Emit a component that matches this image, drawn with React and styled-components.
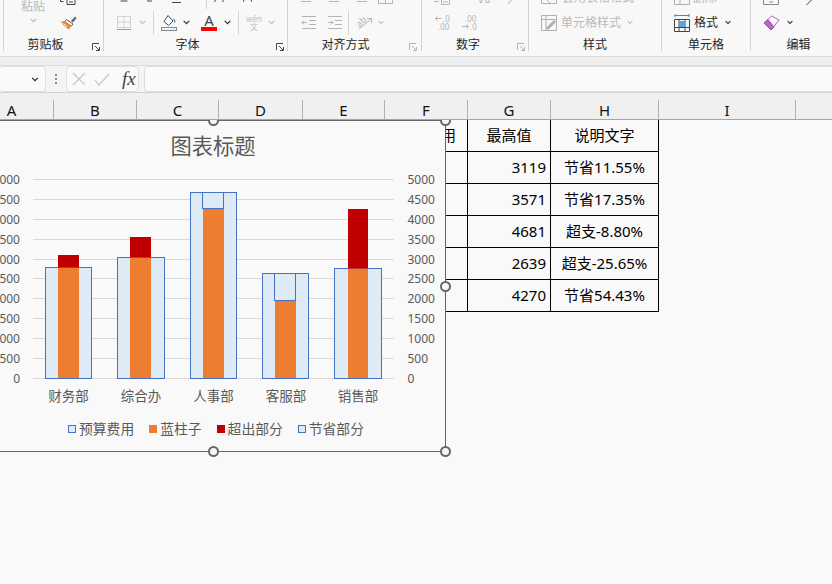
import React from "react";
import styled, { createGlobalStyle } from "styled-components";

const CJK = `"Noto Sans", "Noto Sans CJK SC", sans-serif`;

const GlobalStyle = createGlobalStyle`
  html, body {
    margin: 0;
    height: 100%;
    overflow: hidden;
    background: #f9f9f9;
    font-family: ${CJK};
  }
`;

const Page = styled.div`
  width: 832px;
  height: 584px;
  overflow: hidden;
  display: flex;
  flex-direction: column;
  background: #f9f9f9;
`;

/* ---------- ribbon ---------- */
const Ribbon = styled.div`
  flex: none;
  display: flex;
  box-sizing: border-box;
  height: 57px;
  padding-left: 3px;
  background: #f8f8f8;
  border-bottom: 1px solid #dcdcdc;
`;

const Group = styled.div`
  position: relative;
  flex: none;
  box-sizing: border-box;
  width: ${(p) => p.$w}px;
  height: 51px;
  border-left: 1px solid #d4d4d4;
  display: flex;
  flex-direction: column;
`;

const TopRow = styled.div`
  flex: none;
  height: 10px;
  display: flex;
  align-items: flex-start;
  overflow: hidden;
`;

const MainRow = styled.div`
  flex: none;
  box-sizing: border-box;
  height: 28px;
  padding-bottom: 3px;
  display: flex;
  align-items: center;
`;

const ClipBody = styled.div`
  flex: none;
  height: 38px;
  display: flex;
  overflow: hidden;
`;

const PasteCol = styled.div`
  flex: none;
  width: 24px;
  margin-left: 17px;
  height: 38px;
  display: flex;
  flex-direction: column;
  align-items: center;
  justify-content: flex-end;
  gap: 4px;
  padding-bottom: 15px;
  box-sizing: border-box;
  font-size: 12px;
  line-height: 14px;
  color: #b8b8b8;
`;

const ToolCol = styled.div`
  flex: none;
  margin-left: 15px;
  display: flex;
  flex-direction: column;
`;

const Slot = styled.span`
  flex: none;
  display: flex;
  margin-left: ${(p) => p.$ml || 0}px;
`;

const Sep = styled.span`
  flex: none;
  width: 1px;
  height: ${(p) => p.$h || 24}px;
  margin-left: ${(p) => p.$ml || 0}px;
  background: #d4d4d4;
`;

const ToolText = styled.span`
  flex: none;
  margin-left: ${(p) => p.$ml || 0}px;
  font-size: 12px;
  line-height: 16px;
  white-space: nowrap;
  color: ${(p) => (p.$off ? "#b8b8b8" : "#262626")};
`;

const ClippedText = styled(ToolText)`
  margin-top: -10px;
`;

const GroupLabel = styled.div`
  flex: none;
  height: 13px;
  padding: 0 ${(p) => p.$pr || 0}px 0 ${(p) => p.$pl || 0}px;
  font-size: 12px;
  line-height: 14px;
  text-align: center;
  color: #262626;
`;

const LauncherBox = styled.span`
  position: absolute;
  right: ${(p) => p.$r || 3}px;
  bottom: 0;
  display: flex;
`;

const FontColorWrap = styled.span`
  flex: none;
  width: 16px;
  height: 17px;
  margin-left: ${(p) => p.$ml}px;
  display: flex;
  flex-direction: column;
  align-items: center;
  font-size: 15px;
  line-height: 13px;
  color: #444;
`;

const RedBar = styled.span`
  flex: none;
  width: 16px;
  height: 4px;
  background: #ff0000;
`;

const WenWrap = styled.span`
  flex: none;
  width: 16px;
  margin-left: ${(p) => p.$ml}px;
  display: flex;
  flex-direction: column;
  align-items: center;
  color: #bdbdbd;
  font-size: 8px;
  line-height: 8px;
`;

const Chevron = ({ c = "#333", w = 7 }) => (
  <svg width={w} height="5" viewBox="0 0 7 5" fill="none" stroke={c} strokeWidth="1.2">
    <path d="M.7 .8 3.5 3.6 6.3 .8" />
  </svg>
);

const Launcher = ({ c = "#444", r }) => (
  <LauncherBox $r={r}>
    <svg width="8" height="8" viewBox="0 0 8 8" fill="none" stroke={c} strokeWidth="1">
      <path d="M.5 7V.5H7M3 3 7 7M7.5 4V7.5H4" />
    </svg>
  </LauncherBox>
);

const BordersIcon = () => (
  <svg width="16" height="16" viewBox="0 0 16 16" fill="none" stroke="#b0b0b0">
    <path d="M1.5 1.5h13v11h-13zM8 1.5v11M1.5 7h13" strokeDasharray="1 1" />
    <path d="M1 14.5h14" stroke="#9a9a9a" />
  </svg>
);

const PainterIcon = () => (
  <svg width="18" height="17" viewBox="0 0 18 17" fill="none">
    <path d="M11 7 15 2.5l1.6 1.5L13 8.5z" fill="#666" />
    <path d="M6.5 5.5 13 10l-1.7 2.2-6.6-4.6z" fill="#fff" stroke="#555" />
    <path d="M5 7 1 7.5c1.5 3 4.5 6.5 8 8l2-3.5z" fill="#ee8a2c" />
    <path d="M3.5 9.5 7 13" stroke="#fff" />
  </svg>
);

const FillIcon = () => (
  <svg width="16" height="18" viewBox="0 0 16 18" fill="none">
    <path d="M7 1.5 12 7l-4.500 4.500L3 7.500z" stroke="#444" fill="#fff" />
    <path d="M12.500 4c1.500 1 2 3 1.700 5-1-.6-1.700-2-1.700-5z" fill="#2f7fc1" />
    <rect x=".5" y="13.5" width="15" height="3" fill="#f1f1f1" stroke="#8a8a8a" />
  </svg>
);

const IndentIcon = ({ flip }) => (
  <svg width="15" height="14" viewBox="0 0 15 14" fill="none" stroke="#b4b4b4">
    <path d="M1 .5h14M8 4.500h7M8 8.500h7M1 12.500h14" />
    <path d={flip ? "M1 6.500h5M4 4.500l2 2-2 2" : "M1 6.500h5M3 4.500l-2 2 2 2"} />
  </svg>
);

const AbIcon = () => (
  <svg width="18" height="18" viewBox="0 0 18 18" fill="none" stroke="#b4b4b4">
    <text x="1" y="11" fontSize="9" fill="#b4b4b4" stroke="none" fontFamily="Noto Sans" transform="rotate(-45 6 8)">ab</text>
    <path d="M4 15 16 5M12 4.500h4.500V9" />
  </svg>
);

const DecimalIcon = ({ more }) => (
  <svg width="16" height="16" viewBox="0 0 16 16" fill="#b4b4b4" fontFamily="Noto Sans" fontSize="8">
    {more ? (
      <>
        <text x="4" y="6.500">.00</text>
        <text x="9" y="15">.0</text>
        <path d="M1 11.500h6M5.500 9.500l2 2-2 2" fill="none" stroke="#b4b4b4" />
      </>
    ) : (
      <>
        <text x="9" y="6.500">.0</text>
        <text x="4" y="15">.00</text>
        <path d="M1.500 3.500h6M3.500 1.500l-2 2 2 2" fill="none" stroke="#b4b4b4" />
      </>
    )}
  </svg>
);

const CellStyleIcon = () => (
  <svg width="16" height="16" viewBox="0 0 16 16" fill="none" stroke="#b0b0b0">
    <path d="M.5 .5h15v15H.5z" />
    <path d="M.5 4.500h15M5 .5v15" />
    <path d="M6 14 14 6" strokeWidth="3" />
  </svg>
);

const FormatIcon = () => (
  <svg width="16" height="18" viewBox="0 0 16 18" fill="none" stroke="#444">
    <path d="M.5 5.500h15v12H.5zM.5 13.500h15M5 5.500v12M11 5.500v12" />
    <rect x="5" y="7" width="6" height="6" fill="#5aa5dc" stroke="none" />
    <path d="M1 1.500h14M1 0v3M15 0v3" stroke="#2f8fd8" />
  </svg>
);

const EraserIcon = () => (
  <svg width="17" height="16" viewBox="0 0 17 16" fill="none">
    <path d="M1 8 8.500 1 16 5 8 15z" fill="#fff" stroke="#b061b8" />
    <path d="M1 8 5 4.500l6 7.500-3 3z" fill="#b868c0" stroke="#a04fa8" />
  </svg>
);

const TopMark = ({ w = 10, d, c = "#555" }) => (
  <svg width={w} height="6" viewBox={`0 0 ${w} 6`} fill="none" stroke={c}>
    <path d={d} />
  </svg>
);

/* ---------- formula bar ---------- */
const Band = styled.div`
  flex: none;
  height: 8px;
  background: #efefef;
`;

const FormulaBar = styled.div`
  flex: none;
  box-sizing: border-box;
  height: 27px;
  display: flex;
  align-items: stretch;
  background: #f4f4f4;
  border-top: 1px solid #dcdcdc;
`;

const FieldBox = styled.div`
  flex: ${(p) => (p.$grow ? "1" : "none")};
  box-sizing: border-box;
  width: ${(p) => (p.$w ? `${p.$w}px` : "auto")};
  margin-left: ${(p) => p.$ml || 0}px;
  margin-right: ${(p) => (p.$grow ? "-10px" : "0")};
  background: #fafafa;
  border: 1px solid #dedede;
  border-radius: 4px;
  display: flex;
  align-items: center;
`;

const NameBox = styled(FieldBox)`
  border-left: none;
  padding-left: 31px;
`;

const Dots = styled.span`
  flex: none;
  margin-left: 9px;
  align-self: center;
  display: flex;
  flex-direction: column;
  gap: 2px;
  & > i {
    width: 2px;
    height: 2px;
    background: #8a8a8a;
  }
`;

const FormulaMarks = styled.svg`
  flex: none;
  margin-left: 5px;
`;

const FxText = styled.span`
  margin-left: 6px;
  font-family: "Liberation Serif", serif;
  font-style: italic;
  font-size: 19px;
  line-height: 20px;
  color: #444;
`;

/* ---------- column headers ---------- */
const HeaderRow = styled.div`
  flex: none;
  position: relative;
  z-index: 2;
  box-sizing: border-box;
  height: 28px;
  margin-left: -30px;
  padding-top: 7px;
  display: flex;
  background: #f0f0f0;
  border-top: 1px solid #d2d2d2;
  border-bottom: 1px solid #a6a6a6;
`;

const ColHead = styled.div`
  flex: none;
  box-sizing: border-box;
  width: ${(p) => p.$w}px;
  height: 19px;
  border-right: 1px solid #b0b0b0;
  font-size: 15px;
  line-height: 20px;
  text-align: center;
  color: #111;
`;

/* ---------- sheet ---------- */
const Sheet = styled.div`
  position: relative;
  flex: 1;
`;

const Table = styled.div`
  margin-left: 385px;
  display: grid;
  grid-template-columns: 83px 83px 108px;
  width: 274px;
`;

const Cell = styled.div`
  box-sizing: border-box;
  height: 32px;
  padding: 0 ${(p) => (p.$align === "right" ? "4px" : "0")} 0 0;
  border-right: 1px solid #000;
  border-bottom: 1px solid #000;
  font-size: 15px;
  line-height: 31px;
  white-space: nowrap;
  color: #000;
  text-align: ${(p) => p.$align || "center"};
`;

const Chart = styled.div`
  position: absolute;
  left: -20px;
  top: 0;
  box-sizing: border-box;
  width: 466px;
  height: 332px;
  border: 1px solid #666;
  background: #f9f9f9;
  display: flex;
  flex-direction: column;
`;

const ChartTitle = styled.div`
  flex: none;
  height: 44px;
  padding-top: 9px;
  box-sizing: border-box;
  font-size: 21.3px;
  line-height: 32px;
  text-align: center;
  color: #595959;
`;

const PlotSvg = styled.svg`
  flex: none;
  display: block;
  font-family: ${CJK};
  fill: #595959;
`;

const Legend = styled.div`
  flex: none;
  height: 36px;
  padding: 1px 0 0 6px;
  box-sizing: border-box;
  display: flex;
  justify-content: center;
  gap: 15px;
  font-size: 13.8px;
  line-height: 24px;
  color: #595959;
`;

const LegendItem = styled.span`
  display: flex;
  align-items: center;
  gap: 3px;
  white-space: nowrap;
`;

const Swatch = styled.i`
  flex: none;
  box-sizing: border-box;
  width: 8px;
  height: 8px;
  background: ${(p) => p.$fill};
  border: ${(p) => (p.$line ? "1px solid #4472c4" : "none")};
`;

const Handle = styled.span`
  position: absolute;
  left: ${(p) => p.$x}px;
  top: ${(p) => p.$y}px;
  box-sizing: border-box;
  width: 11px;
  height: 11px;
  border: 2px solid #666;
  border-radius: 50%;
  background: #f9f9f9;
`;

const COLUMNS = [
  ["A", 84], ["B", 83], ["C", 82], ["D", 84], ["E", 82],
  ["F", 83], ["G", 83], ["H", 108], ["I", 137],
];

const DEPTS = [
  { name: "财务部", budget: 2796, actual: 3119, barX: 45.5, barW: 46, coreX: 58, coreW: 21, cx: 68.5, note: "节省11.55%" },
  { name: "综合办", budget: 3043, actual: 3571, barX: 117.5, barW: 47, coreX: 130, coreW: 21, cx: 141, note: "节省17.35%" },
  { name: "人事部", budget: 4681, actual: 4269, barX: 190.5, barW: 46, coreX: 203, coreW: 21, cx: 213.5, note: "超支-8.80%" },
  { name: "客服部", budget: 2639, actual: 1962, barX: 262.5, barW: 46, coreX: 275, coreW: 21, cx: 286, note: "超支-25.65%" },
  { name: "销售部", budget: 2765, actual: 4270, barX: 334.5, barW: 47, coreX: 348, coreW: 20, cx: 358, note: "节省54.43%" },
];

const TICKS = [0, 500, 1000, 1500, 2000, 2500, 3000, 3500, 4000, 4500, 5000];
const yOf = (v) => 378.4 - v * 0.0398;
const snap = (v) => Math.floor(yOf(v)) + 0.5;

function Plot() {
  return (
    <PlotSvg width="464" height="245" viewBox="-19 165 464 245">
      {TICKS.map((t) => (
        <g key={t}>
          <line x1="33" x2="394" y1={snap(t)} y2={snap(t)} stroke="#d9d9d9" />
          <text x="20" y={yOf(t)} fontSize="12" textAnchor="end" dominantBaseline="central">{t}</text>
          <text x="407.5" y={yOf(t)} fontSize="12" dominantBaseline="central">{t}</text>
        </g>
      ))}
      {DEPTS.map((d) => {
        const low = Math.min(d.budget, d.actual);
        const high = Math.max(d.budget, d.actual);
        const redTop = Math.ceil(yOf(high));
        return (
          <g key={d.name}>
            <rect x={d.barX} y={snap(d.budget)} width={d.barW} height={378.5 - snap(d.budget)} fill="#deebf7" stroke="#4472c4" />
            <rect x={d.coreX} y={snap(low)} width={d.coreW} height={378 - snap(low)} fill="#ed7d31" />
            {d.actual > d.budget ? (
              <rect x={d.coreX} y={redTop} width={d.coreW} height={snap(low) - redTop} fill="#c00000" />
            ) : (
              <rect x={d.coreX - 0.5} y={snap(high)} width={d.coreW} height={snap(low) - snap(high)} fill="none" stroke="#4472c4" />
            )}
            <text x={d.cx} y="396" fontSize="13.5" textAnchor="middle" dominantBaseline="central">{d.name}</text>
          </g>
        );
      })}
    </PlotSvg>
  );
}

export default function App() {
  return (
    <Page>
      <GlobalStyle />
      <Ribbon>
        <Group $w={100}>
          <ClipBody>
            <PasteCol>
              <span>粘贴</span>
              <Chevron c="#b8b8b8" />
            </PasteCol>
            <ToolCol>
              <TopRow>
                <TopMark w={16} d="M.5 0v1.500h3M7 0v4.500h8V0M9 2h4" c="#444" />
              </TopRow>
              <MainRow>
                <PainterIcon />
              </MainRow>
            </ToolCol>
          </ClipBody>
          <GroupLabel $pr={16}>剪贴板</GroupLabel>
          <Launcher />
        </Group>

        <Group $w={184}>
          <TopRow>
            <Slot $ml={16}><TopMark w={8} d="M.5 1h7" c="#444" /></Slot>
            <Slot $ml={19}><TopMark w={6} d="M0 1h5" c="#444" /></Slot>
            <Slot $ml={19}><TopMark w={9} d="M0 2.500h9" c="#444" /></Slot>
            <Sep $ml={25} $h={9} />
            <Slot $ml={7}><TopMark w={10} d="M1.500 0 .5 2M8.500 0l1 2" c="#444" /></Slot>
            <Slot $ml={19}><TopMark w={9} d="M1 0 0 2M8 0l1 2" c="#444" /></Slot>
          </TopRow>
          <MainRow>
            <Slot $ml={12}><BordersIcon /></Slot>
            <Slot $ml={7}><Chevron c="#c0c0c0" /></Slot>
            <Sep $ml={7} />
            <Slot $ml={7}><FillIcon /></Slot>
            <Slot $ml={6}><Chevron /></Slot>
            <FontColorWrap $ml={11}>
              A
              <RedBar />
            </FontColorWrap>
            <Slot $ml={7}><Chevron /></Slot>
            <Sep $ml={7} />
            <WenWrap $ml={7}>
              <span>wén</span>
              <span>文</span>
            </WenWrap>
            <Slot $ml={6}><Chevron c="#c0c0c0" /></Slot>
          </MainRow>
          <GroupLabel $pr={16}>字体</GroupLabel>
          <Launcher />
        </Group>

        <Group $w={134}>
          <TopRow>
            <Slot $ml={13}><TopMark w={10} d="M0 1.500h10" c="#b4b4b4" /></Slot>
            <Slot $ml={18}><TopMark w={10} d="M0 1.500h10" c="#b4b4b4" /></Slot>
            <Slot $ml={18}><TopMark w={10} d="M0 1.500h10" c="#b4b4b4" /></Slot>
            <Slot $ml={11}><TopMark w={15} d="M.5 0v3.500h14V0M7.500 0v3.500" c="#b4b4b4" /></Slot>
          </TopRow>
          <MainRow>
            <Slot $ml={13}><IndentIcon /></Slot>
            <Slot $ml={11}><IndentIcon flip /></Slot>
            <Sep $ml={6} />
            <Slot $ml={6}><AbIcon /></Slot>
            <Slot $ml={5}><Chevron c="#c0c0c0" w={6} /></Slot>
          </MainRow>
          <GroupLabel $pr={18}>对齐方式</GroupLabel>
          <Launcher c="#b4b4b4" r={4} />
        </Group>

        <Group $w={107}>
          <TopRow>
            <Slot $ml={12}><TopMark w={16} d="M0 1.500h5M7.500 0v4.500h8V0M9 2h5" c="#b4b4b4" /></Slot>
            <Slot $ml={28}><TopMark w={12} d="M2 0v2.500h2V0M8 0v2.500h3V0" c="#b4b4b4" /></Slot>
            <Slot $ml={17}><TopMark w={5} d="M4.500 0 1 4" c="#b4b4b4" /></Slot>
          </TopRow>
          <MainRow>
            <Slot $ml={12}><DecimalIcon /></Slot>
            <Slot $ml={11}><DecimalIcon more /></Slot>
          </MainRow>
          <GroupLabel $pr={14}>数字</GroupLabel>
          <Launcher c="#b4b4b4" />
        </Group>

        <Group $w={133}>
          <TopRow>
            <Slot $ml={12}><TopMark w={16} d="M.5 0v3.500h15V0M6 0l3 3" c="#b0b0b0" /></Slot>
            <ClippedText $ml={5} $off>套用表格格式</ClippedText>
          </TopRow>
          <MainRow>
            <Slot $ml={12}><CellStyleIcon /></Slot>
            <ToolText $ml={4} $off>单元格样式</ToolText>
            <Slot $ml={6}><Chevron c="#c0c0c0" w={6} /></Slot>
          </MainRow>
          <GroupLabel>样式</GroupLabel>
        </Group>

        <Group $w={89}>
          <TopRow>
            <Slot $ml={12}><TopMark w={18} d="M.5 0v4.500h15V0M6 0v4.500" c="#b0b0b0" /></Slot>
            <ClippedText $ml={1} $off>删除</ClippedText>
          </TopRow>
          <MainRow>
            <Slot $ml={12}><FormatIcon /></Slot>
            <ToolText $ml={4}>格式</ToolText>
            <Slot $ml={7}><Chevron w={6} /></Slot>
          </MainRow>
          <GroupLabel>单元格</GroupLabel>
        </Group>

        <Group $w={82}>
          <TopRow>
            <Slot $ml={12}><TopMark w={16} d="M.5 0v4.500h15V0M6 2h4" c="#888" /></Slot>
            <Slot $ml={26}><TopMark w={7} d="M6.500 0 1.500 5" c="#444" /></Slot>
          </TopRow>
          <MainRow>
            <Slot $ml={12}><EraserIcon /></Slot>
            <Slot $ml={7}><Chevron w={6} /></Slot>
          </MainRow>
          <GroupLabel $pl={14}>编辑</GroupLabel>
        </Group>
      </Ribbon>

      <Band />

      <FormulaBar>
        <NameBox $w={46}>
          <Chevron c="#222" w={8} />
        </NameBox>
        <Dots>
          <i />
          <i />
          <i />
        </Dots>
        <FieldBox $w={73} $ml={9}>
          <FormulaMarks width="44" height="14" viewBox="0 0 44 14" fill="none" stroke="#c8c8c8" strokeWidth="1.2">
            <path d="M1 1 13 13M13 1 1 13M23 8l4 5L37 2" />
          </FormulaMarks>
          <FxText>fx</FxText>
        </FieldBox>
        <FieldBox $grow $ml={5} />
      </FormulaBar>

      <HeaderRow>
        {COLUMNS.map(([label, w]) => (
          <ColHead key={label} $w={w}>{label}</ColHead>
        ))}
      </HeaderRow>

      <Sheet>
        <Table>
          <Cell>实际费用</Cell>
          <Cell>最高值</Cell>
          <Cell>说明文字</Cell>
          {DEPTS.map((d) => (
            <React.Fragment key={d.name}>
              <Cell />
              <Cell $align="right">{Math.max(d.budget, d.actual)}</Cell>
              <Cell>{d.note}</Cell>
            </React.Fragment>
          ))}
        </Table>

        <Chart>
          <ChartTitle>图表标题</ChartTitle>
          <Plot />
          <Legend>
            <LegendItem><Swatch $fill="#deebf7" $line />预算费用</LegendItem>
            <LegendItem><Swatch $fill="#ed7d31" />蓝柱子</LegendItem>
            <LegendItem><Swatch $fill="#c00000" />超出部分</LegendItem>
            <LegendItem><Swatch $fill="#deebf7" $line />节省部分</LegendItem>
          </Legend>
          <Handle $x={227} $y={-6} />
          <Handle $x={459} $y={-6} />
          <Handle $x={459} $y={160} />
          <Handle $x={227} $y={325} />
          <Handle $x={459} $y={325} />
        </Chart>
      </Sheet>
    </Page>
  );
}
